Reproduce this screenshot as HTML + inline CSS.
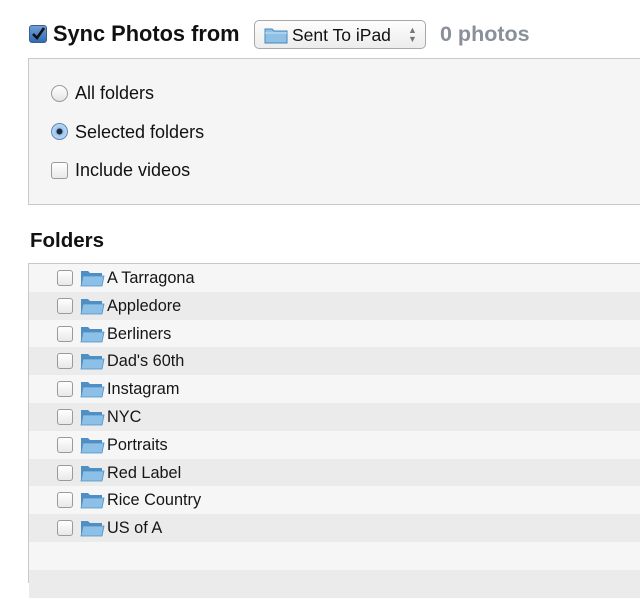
<!DOCTYPE html>
<html><head><style>
body{margin:0;width:640px;height:577px;background:#fff;font-family:"Liberation Sans",Arial,sans-serif;overflow:hidden;position:relative;color:#111}
.abs{position:absolute}
.cb{position:absolute;width:15px;height:15px;border:1px solid #9a9a9a;border-radius:3px;background:linear-gradient(#fff,#e8e8e8);box-sizing:border-box}
.rad{position:absolute;width:17px;height:17px;border:1px solid #9a9a9a;border-radius:50%;background:linear-gradient(#fff,#e4e4e4);box-sizing:border-box}
.row{position:absolute;left:29px;width:620px;height:28px}
.row .t{position:absolute;left:78px;top:5px;font-size:16.3px;color:#161616}
.row .cb{left:28px;top:6px;width:16px;height:16px}
.row svg{position:absolute;left:51px;top:5px}
</style></head><body>
<div class="abs" style="left:29px;top:25px;width:18px;height:18px;background:linear-gradient(#6f9fd6,#2f6cb4);border-radius:3px;border:1px solid #3d5f8a;box-sizing:border-box">
<svg width="16" height="16" viewBox="0 0 16 16" style="position:absolute;left:0;top:0"><path d="M3 8 L7 12 L14 2" stroke="#111" stroke-width="2.6" fill="none"/></svg></div>
<div class="abs" style="left:53px;top:21px;font-size:21.8px;font-weight:bold">Sync Photos from</div>
<div class="abs" style="left:254px;top:20px;width:172px;height:29px;border:1px solid #a8a8a8;border-radius:5px;background:linear-gradient(#fdfdfd,#ececec);box-sizing:border-box">
<svg width="24" height="18" viewBox="0 0 24 18" style="position:absolute;left:9px;top:5px"><path d="M1 3 h7 l2 2 h13 v12 h-22z" fill="#8fc0e6" stroke="#4a86b8"/><path d="M1 7 h22" stroke="#c7e2f5"/></svg>
<div class="abs" style="left:37px;top:4px;font-size:17.5px">Sent To iPad</div>
<div class="abs" style="left:153px;top:5px;font-size:9px;color:#777;line-height:9px">▲<br>▼</div></div>
<div class="abs" style="left:440px;top:22px;font-size:21.5px;font-weight:bold;color:#8a9099">0 photos</div>

<div class="abs" style="left:28px;top:58px;width:620px;height:147px;background:#f5f5f5;border:1px solid #c9c9c9;box-sizing:border-box"></div>
<div class="rad" style="left:51px;top:85px"></div>
<div class="abs" style="left:75px;top:83px;font-size:18px">All folders</div>
<div class="rad" style="left:51px;top:123px;border-color:#5b87b8;background:radial-gradient(circle,#1a2a40 0 2.5px,#9cc4ea 3.5px,#d6e8f8)"></div>
<div class="abs" style="left:75px;top:122px;font-size:18px">Selected folders</div>
<div class="cb" style="left:51px;top:162px;width:17px;height:17px"></div>
<div class="abs" style="left:75px;top:160px;font-size:18px">Include videos</div>

<div class="abs" style="left:30px;top:229px;font-size:20.5px;font-weight:bold">Folders</div>
<div class="abs" style="left:28px;top:263px;width:620px;height:320px;border:1px solid #c9c9c9;border-right:none;box-sizing:border-box;background:#f5f5f5"></div>
<div id="rows"></div>
<script>
var n=["A Tarragona","Appledore","Berliners","Dad's 60th","Instagram","NYC","Portraits","Red Label","Rice Country","US of A","",""];
var h="";for(var i=0;i<12;i++){var y=264+i*27.8;h+='<div class="row" style="top:'+y+'px;background:'+(i%2?'#ebebeb':'#f6f6f6')+'">'+(n[i]?'<div class="cb"></div><svg width="25" height="18" viewBox="0 0 25 18"><path d="M1 2 h7 l2 2 h12 v13 h-21z" fill="#4f8fc4"/><path d="M3 7 h21 l-2 10 h-21z" fill="#8cc0e6" stroke="#4f8fc4" stroke-width=".8"/></svg><div class="t">'+n[i]+'</div>':'')+'</div>';}
document.getElementById("rows").innerHTML=h;
</script>
</body></html>
